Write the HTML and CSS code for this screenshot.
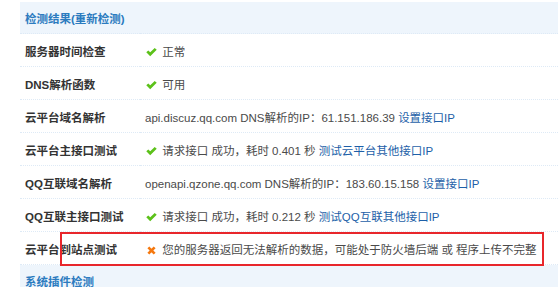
FILE: index.html
```html
<!DOCTYPE html>
<html lang="zh-CN">
<head>
  <meta charset="UTF-8" />
  <title>检测结果</title>
  <link rel="stylesheet" href="styles.css">
</head>
<body>
  <div class="panel">
    <table class="tb">
      <tr class="th">
        <td colspan="2">检测结果(<a href="#">重新检测</a>)</td>
      </tr>
      <tr>
        <th>服务器时间检查</th>
        <td><svg class="ok" viewBox="0 0 12 10"><path d="M0.3 5.4 L2.5 3.3 L4.6 5.4 L9.5 0.5 L11.7 2.6 L4.6 9.6 Z"/></svg> 正常</td>
      </tr>
      <tr>
        <th>DNS解析函数</th>
        <td><svg class="ok" viewBox="0 0 12 10"><path d="M0.3 5.4 L2.5 3.3 L4.6 5.4 L9.5 0.5 L11.7 2.6 L4.6 9.6 Z"/></svg> 可用</td>
      </tr>
      <tr>
        <th>云平台域名解析</th>
        <td>api.discuz.qq.com DNS解析的IP：61.151.186.39 <a href="#">设置接口IP</a></td>
      </tr>
      <tr>
        <th>云平台主接口测试</th>
        <td><svg class="ok" viewBox="0 0 12 10"><path d="M0.3 5.4 L2.5 3.3 L4.6 5.4 L9.5 0.5 L11.7 2.6 L4.6 9.6 Z"/></svg> 请求接口 成功，耗时 0.401 秒 <a href="#">测试云平台其他接口IP</a></td>
      </tr>
      <tr>
        <th>QQ互联域名解析</th>
        <td>openapi.qzone.qq.com DNS解析的IP：183.60.15.158 <a href="#">设置接口IP</a></td>
      </tr>
      <tr>
        <th>QQ互联主接口测试</th>
        <td><svg class="ok" viewBox="0 0 12 10"><path d="M0.3 5.4 L2.5 3.3 L4.6 5.4 L9.5 0.5 L11.7 2.6 L4.6 9.6 Z"/></svg> 请求接口 成功，耗时 0.212 秒 <a href="#">测试QQ互联其他接口IP</a></td>
      </tr>
      <tr>
        <th>云平台到站点测试</th>
        <td><svg class="no" viewBox="0 0 10 10"><path d="M1.5 1.5 L8.5 8.5 M8.5 1.5 L1.5 8.5"/></svg> 您的服务器返回无法解析的数据，可能处于防火墙后端 或 程序上传不完整</td>
      </tr>
      <tr class="th">
        <td colspan="2">系统插件检测</td>
      </tr>
    </table>
    <!-- annotation box drawn over the failing row -->
    <div class="redbox"></div>
  </div>
</body>
</html>
```

FILE: styles.css
```css
body {
  margin: 0;
  background: #fff;
  font-family: "Liberation Sans", "Noto Sans CJK SC", sans-serif;
  font-size: 11.5px;
  color: #4a4a4a;
  overflow: hidden;
}

.panel {
  position: relative;
  padding: 2px 0 0 20px;
}

.tb {
  width: 560px;
  border-collapse: collapse;
}

.tb td, .tb th {
  height: 31px;
  padding: 1px 5px 0;
  border-bottom: 1px dotted #deeaf6;
  text-align: left;
  vertical-align: middle;
  white-space: nowrap;
}

.tb th {
  width: 110px;
  font-weight: bold;
  color: #333;
}

.tb .th td {
  height: 30px;
  background: #eef5fc;
  color: #2b7bbf;
  font-weight: bold;
}

.tb .th td a {
  color: #2b7bbf;
}

a {
  color: #1d5fa8;
  text-decoration: none;
}

.ok {
  width: 11px;
  height: 10px;
  vertical-align: -1px;
  margin: 0 2px 0 1px;
}

.ok path {
  fill: #5cc11a;
}

.no {
  width: 9px;
  height: 9px;
  vertical-align: -1px;
  margin: 0 3px 0 2px;
}

.no path {
  stroke: #f5780f;
  stroke-width: 3;
}

.redbox {
  position: absolute;
  left: 60px;
  top: 232px;
  width: 480px;
  height: 30px;
  border: 2px solid #e8262b;
}
```
